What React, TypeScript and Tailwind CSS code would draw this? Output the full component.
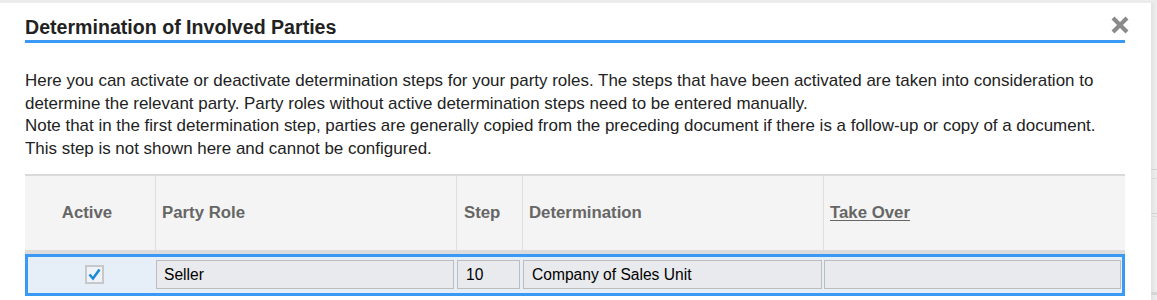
export default function App() {
    const lines = [
        'Here you can activate or deactivate determination steps for your party roles. The steps that have been activated are taken into consideration to',
        'determine the relevant party. Party roles without active determination steps need to be entered manually.',
        'Note that in the first determination step, parties are generally copied from the preceding document if there is a follow-up or copy of a document.',
        'This step is not shown here and cannot be configured.',
    ];

    return (
        <div className="w-[1157px] h-[300px] overflow-hidden bg-[#ececec] flex font-['Liberation_Sans',Arial,sans-serif]">
            <div className="relative w-[1151px] mt-[3px] bg-white pl-[25px] pr-[26px]">
                <div className="pt-[12px] pb-[1px] border-b-[3px] border-[#3b99f6]">
                    <h1 className="text-[19.6px] leading-[24px] font-bold text-[#222]">Determination of Involved Parties</h1>
                </div>
                <button className="absolute right-[21px] top-[12px] w-[20px] h-[20px] flex items-center justify-center" aria-label="Close">
                    <svg width="20" height="20" viewBox="0 0 20 20">
                        <path d="M3 3 L17 17 M17 3 L3 17" stroke="#8a8a8a" strokeWidth="4.2" strokeLinecap="butt" />
                    </svg>
                </button>

                <div className="mt-[27px] text-[16.95px] leading-[22.7px] text-[#222] whitespace-nowrap">
                    {lines.map((line) => (
                        <div key={line}>{line}</div>
                    ))}
                </div>

                <div className="mt-[13px] w-[1100px]">
                    <div className="grid grid-cols-[130px_301px_66px_301px_302px] h-[76px] border-t-2 border-[#d9d9d9] bg-[#f4f4f4] text-[16.8px] font-bold text-[#666]">
                        <div className="flex items-center justify-center pr-[6px]">Active</div>
                        <div className="flex items-center border-l border-[#dedede] pl-[6px]">Party Role</div>
                        <div className="flex items-center border-l border-[#dedede] pl-[7px]">Step</div>
                        <div className="flex items-center border-l border-[#dedede] pl-[6px]">Determination</div>
                        <div className="flex items-center border-l border-[#dedede] pl-[6px]">
                            <span className="underline underline-offset-2">Take Over</span>
                        </div>
                    </div>
                    <div className="h-[4px] bg-[#dcdcdc]" />
                    <div className="grid grid-cols-[127px_301px_66px_301px_299px] h-[42px] border-[3px] border-[#3b99f6] bg-[#e6eef8] text-[15.6px] text-black">
                        <div className="flex items-center justify-center pl-[6px]">
                            <div className="w-[19px] h-[19px] border-2 border-[#c8c8c8] bg-[#eef3f9] flex items-center justify-center">
                                <svg width="13" height="13" viewBox="0 0 13 13">
                                    <path d="M1.5 6.5 L5 10.5 L11.5 1.5" fill="none" stroke="#1d8ad9" strokeWidth="2.6" />
                                </svg>
                            </div>
                        </div>
                        <div className="pl-[1px] pr-[2px] pt-[3px]">
                            <div className="h-[29px] border border-[#bdbdbd] bg-[#e8eaed] flex items-center pl-[7px]">Seller</div>
                        </div>
                        <div className="pl-[1px] pr-[2px] pt-[3px]">
                            <div className="h-[29px] border border-[#bdbdbd] bg-[#e8eaed] flex items-center pl-[8px]">10</div>
                        </div>
                        <div className="pl-[1px] pr-[1px] pt-[3px]">
                            <div className="h-[29px] border border-[#bdbdbd] bg-[#e8eaed] flex items-center pl-[8px]">Company of Sales Unit</div>
                        </div>
                        <div className="pl-[1px] pr-[1px] pt-[3px]">
                            <div className="h-[29px] border border-[#bdbdbd] bg-[#e8eaed]" />
                        </div>
                    </div>
                </div>
            </div>
            <div className="flex-1 mt-[3px] bg-gradient-to-r from-[#e2e2e2] to-[#efefef] flex flex-col">
                <div className="h-[166px]" />
                <div className="h-px bg-[#d4d4d4]" />
                <div className="h-[8px]" />
                <div className="h-px bg-[#dadada]" />
                <div className="h-[34px]" />
                <div className="h-px bg-[#d4d4d4]" />
                <div className="h-[2px]" />
                <div className="h-px bg-[#dadada]" />
                <div className="h-[75px]" />
                <div className="h-[3px] bg-[#d6d6d6]" />
            </div>
        </div>
    );
}
